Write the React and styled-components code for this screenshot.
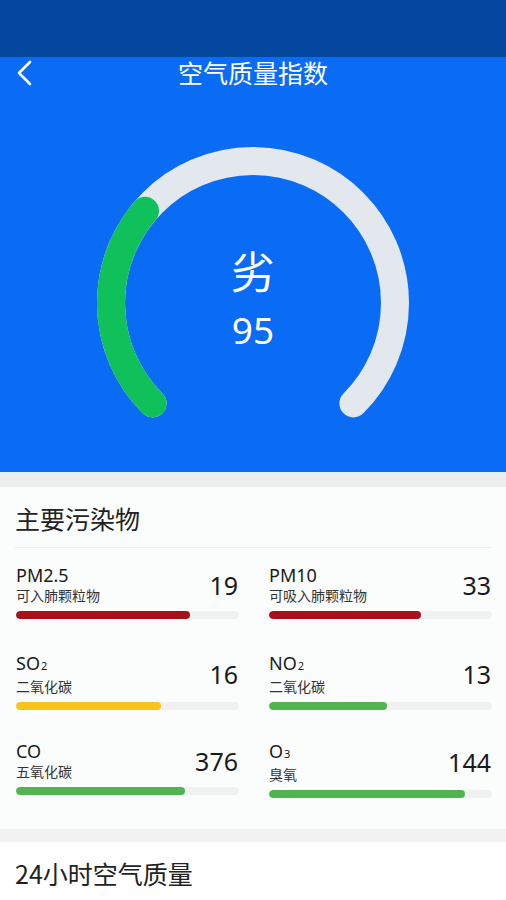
import React from 'react'
import styled, { createGlobalStyle } from 'styled-components'

const GlobalStyle = createGlobalStyle`
    html, body {
        margin: 0;
        padding: 0;
        background: #f2f2f2;
        font-family: "Noto Sans", "Noto Sans CJK SC", sans-serif;
    }
    * { box-sizing: border-box; }
`

const pollutants = [
    { name: 'PM2.5', desc: '可入肺颗粒物', value: 19, pct: 78, color: '#a8111b' },
    { name: 'PM10', desc: '可吸入肺颗粒物', value: 33, pct: 68, color: '#a8111b' },
    { name: 'SO', sub: '2', desc: '二氧化碳', value: 16, pct: 65, color: '#f6c51a' },
    { name: 'NO', sub: '2', desc: '二氧化碳', value: 13, pct: 53, color: '#52b450' },
    { name: 'CO', desc: '五氧化碳', value: 376, pct: 76, color: '#52b450' },
    { name: 'O', sub: '3', desc: '臭氧', value: 144, pct: 88, color: '#52b450' },
]

function Gauge({ value, max }) {
    const r = 142
    const cx = 156
    const cy = 156
    const point = (deg) => {
        const a = (deg * Math.PI) / 180
        return [cx + r * Math.sin(a), cy - r * Math.cos(a)]
    }
    const arc = (from, to) => {
        const [x1, y1] = point(from)
        const [x2, y2] = point(to)
        const large = to - from > 180 ? 1 : 0
        return `M ${x1} ${y1} A ${r} ${r} 0 ${large} 1 ${x2} ${y2}`
    }
    const end = -135 + (270 * value) / max
    return (
        <svg width="312" height="276" viewBox="0 0 312 276">
            <path d={arc(-135, 135)} fill="none" stroke="#e3e8ee" strokeWidth="28" strokeLinecap="round" />
            <path d={arc(-135, end)} fill="none" stroke="#10c05a" strokeWidth="28" strokeLinecap="round" />
        </svg>
    )
}

function App() {
    return (
        <Page>
            <GlobalStyle />
            <StatusBar />
            <Hero>
                <NavBar>
                    <Back>
                        <svg width="16" height="26" viewBox="0 0 16 26">
                            <path d="M14 2 L3 13 L14 24" fill="none" stroke="#fff" strokeWidth="2.6" strokeLinecap="round" strokeLinejoin="round" />
                        </svg>
                    </Back>
                    <Title>空气质量指数</Title>
                </NavBar>
                <GaugeWrap>
                    <Gauge value={95} max={300} />
                    <GaugeText>
                        <Level>劣</Level>
                        <Score>95</Score>
                    </GaugeText>
                </GaugeWrap>
            </Hero>
            <Separator />
            <Card>
                <CardTitle>主要污染物</CardTitle>
                <Divider />
                <Grid>
                    {pollutants.map((p) => (
                        <Item key={p.name + p.desc}>
                            <ItemHead>
                                <div>
                                    <Name>{p.name}{p.sub && <Sub>{p.sub}</Sub>}</Name>
                                    <Desc>{p.desc}</Desc>
                                </div>
                                <Value>{p.value}</Value>
                            </ItemHead>
                            <Track>
                                <Fill color={p.color} style={{ width: `${p.pct}%` }} />
                            </Track>
                        </Item>
                    ))}
                </Grid>
            </Card>
            <Card2>
                <CardTitle>24小时空气质量</CardTitle>
            </Card2>
        </Page>
    )
}

export default App

const Page = styled.div`
    width: 506px;
    height: 900px;
    overflow: hidden;
    background: #f2f2f2;
`
const StatusBar = styled.div`
    height: 57px;
    background: #03479f;
`
const Hero = styled.div`
    height: 415px;
    background: #0a6cf5;
    display: flex;
    flex-direction: column;
    align-items: center;
`
const NavBar = styled.div`
    width: 100%;
    height: 36px;
    position: relative;
    display: flex;
    align-items: center;
    justify-content: center;
`
const Back = styled.div`
    position: absolute;
    left: 16px;
    top: 3px;
    display: flex;
`
const Title = styled.div`
    color: #fff;
    font-size: 25px;
    font-family: "Noto Sans CJK SC", sans-serif;
    line-height: 36px;
    margin-top: -6px;
`
const GaugeWrap = styled.div`
    margin-top: 54px;
    position: relative;
    width: 312px;
    height: 276px;
`
const GaugeText = styled.div`
    position: absolute;
    left: 0;
    right: 0;
    top: 96px;
    display: flex;
    flex-direction: column;
    align-items: center;
    color: #fff;
`
const Level = styled.div`
    font-size: 44px;
    line-height: 54px;
    font-family: "Noto Sans CJK SC", sans-serif;
`
const Score = styled.div`
    font-size: 37px;
    line-height: 50px;
    margin-top: 8px;
`
const Separator = styled.div`
    height: 15px;
    border-top: 3px solid #e0f3fb;
    background: #ededed;
`
const Card = styled.div`
    background: #fbfdfd;
    padding: 0 15px;
    height: 342px;
`
const Card2 = styled.div`
    background: #fff;
    margin-top: 13px;
    padding: 0 15px;
    height: 100px;
`
const CardTitle = styled.div`
    font-family: "Noto Sans CJK SC", sans-serif;
    font-size: 25px;
    color: #222;
    line-height: 32px;
    padding-top: 15px;
`
const Divider = styled.div`
    height: 1px;
    background: #ececec;
    margin-top: 13px;
`
const Grid = styled.div`
    display: grid;
    grid-template-columns: 224px 224px;
    column-gap: 29px;
    row-gap: 0;
    padding-top: 15px;
`
const Item = styled.div`
    height: 88px;
    padding-left: 1px;
`
const ItemHead = styled.div`
    display: flex;
    justify-content: space-between;
    align-items: center;
`
const Name = styled.div`
    font-size: 18px;
    line-height: 24px;
    color: #1a1a1a;
`
const Sub = styled.span`
    font-size: 11px;
    margin-left: 1px;
`
const Desc = styled.div`
    font-family: "Noto Sans CJK SC", sans-serif;
    font-size: 14px;
    line-height: 17px;
    color: #333;
`
const Value = styled.div`
    font-size: 25px;
    line-height: 30px;
    color: #1a1a1a;
    padding-right: 1px;
    margin-top: 2px;
`
const Track = styled.div`
    margin-top: 7px;
    height: 8px;
    border-radius: 4px;
    background: #f1f1f1;
    overflow: hidden;
`
const Fill = styled.div`
    height: 100%;
    border-radius: 4px;
    background: ${({ color }) => color};
`
